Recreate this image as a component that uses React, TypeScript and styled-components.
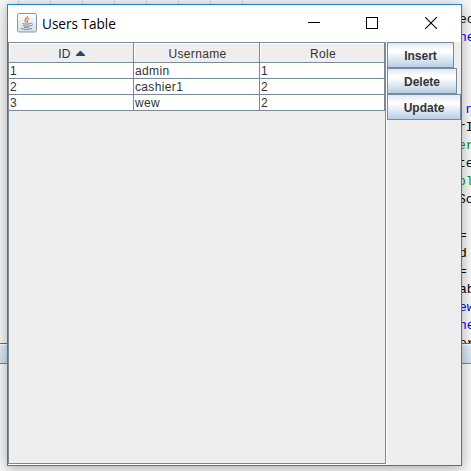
import React from "react";
import styled, { createGlobalStyle } from "styled-components";

const LINE = "#7a8a99";

const GlobalStyle = createGlobalStyle`
  * { box-sizing: border-box; }
  body { margin: 0; overflow: hidden; }
`;

const Desktop = styled.div`
  position: relative;
  width: 471px;
  height: 471px;
  overflow: hidden;
  background: #f7f7f7;
`;

const Editor = styled.div`
  display: flex;
  flex-direction: column;
  height: 471px;
`;

const Ruler = styled.div`
  flex: none;
  display: flex;
  gap: 31px;
  height: 11px;
  padding: 1px 0 0 18px;
`;

const Tick = styled.span`
  width: 1px;
  height: 3px;
  background: repeating-linear-gradient(#b5b5b5 0 1px, transparent 1px 2px);
`;

const CodeArea = styled.div`
  flex: none;
  height: 332px;
  padding-left: 456px;
  overflow: hidden;
`;

const CodeLine = styled.div<{ $color?: string; $shift?: number }>`
  height: 18px;
  padding-left: ${(p) => p.$shift ?? 0}px;
  font: 13px/18px "Liberation Mono", monospace;
  white-space: pre;
  color: ${(p) => p.$color ?? "#000"};
`;

const SplitBar = styled.div`
  flex: none;
  height: 21px;
  border-top: 1px solid #4c7396;
  border-bottom: 1px solid ${LINE};
  background: linear-gradient(#fbfdff 0 1px, #dfeaf5 2px, #cfdfee);
`;

const Window = styled.main`
  position: absolute;
  left: 7px;
  top: 4px;
  width: 455px;
  height: 462px;
  display: flex;
  flex-direction: column;
  border: 1px solid #1883d7;
  background: #eee;
  box-shadow: 0 2px 12px rgba(0, 0, 0, 0.32);
`;

const TitleBar = styled.header`
  flex: none;
  display: flex;
  align-items: center;
  height: 37px;
  padding: 0 24px 1px 9px;
  background: #fff;
`;

const Title = styled.h1`
  flex: 1;
  margin: 0 0 0 5px;
  font: 15px/20px "Open Sans", sans-serif;
  color: #000;
`;

const TitleText = styled.span`
  display: inline-block;
  transform: scaleX(0.905);
  transform-origin: left;
  white-space: nowrap;
`;

const Controls = styled.div`
  display: flex;
  align-items: center;
`;

const ControlIcon = styled.svg<{ $gap?: number }>`
  display: block;
  margin-right: ${(p) => p.$gap ?? 0}px;
`;

const Content = styled.div`
  flex: 1;
  display: flex;
  min-height: 0;
`;

const ScrollPane = styled.section`
  width: 378px;
  height: 422px;
  border: 1px solid ${LINE};
  box-shadow: 1px 1px #fff;
`;

const Table = styled.div`
  width: 376px;
  font: 12px/15px "Liberation Sans", Arial, sans-serif;
  letter-spacing: 0.35px;
  color: #333;
`;

const Row = styled.div`
  display: grid;
  grid-template-columns: 125px 126px 125px;
`;

const HeaderCell = styled.div`
  display: flex;
  align-items: center;
  justify-content: center;
  gap: 5px;
  height: 20px;
  padding: 3px 0 0 2px;
  border-right: 1px solid ${LINE};
  border-bottom: 1px solid ${LINE};
  background: #eee;
  box-shadow: inset 1px 1px #fff;
`;

const SortArrow = styled.svg`
  display: block;
  margin: -2px 1px 0 0;
`;

const Cell = styled.div`
  height: 16px;
  padding: 1px 0 0 1px;
  line-height: 14px;
  border-right: 1px solid ${LINE};
  border-bottom: 1px solid ${LINE};
  background: #fff;
`;

const Actions = styled.nav`
  display: flex;
  flex-direction: column;
  align-items: flex-start;
  padding-left: 1px;
`;

const Button = styled.button<{ $width: number }>`
  width: ${(p) => p.$width}px;
  height: 26px;
  padding: 2px 0 0;
  border: 1px solid ${LINE};
  border-radius: 0;
  background: linear-gradient(#dde8f3 0, #fff 30%, #fff 36%, #b8cfe5 100%);
  font: bold 12px/15px "Liberation Sans", Arial, sans-serif;
  color: #333;
`;

const JavaIcon = () => (
  <svg width="20" height="20" viewBox="0 0 20 20" fill="none">
    <defs>
      <linearGradient id="tile" x1="0" y1="0" x2="0" y2="1">
        <stop stopColor="#fff" />
        <stop offset="1" stopColor="#d5dbe1" />
      </linearGradient>
    </defs>
    <rect x="0.5" y="0.5" width="19" height="18.5" rx="1.5" fill="url(#tile)" stroke="#8998a9" />
    <path d="M10.5 3C11 5 7 5.9 8 8L9.4 9.6M12.3 5.3C9 6.5 10 7.3 10.8 8.3L10 9.6" stroke="#e5873c" strokeWidth="1.3" />
    <path d="M5.5 10.5c2 .8 6 .8 8 0M6 12.5c2 .8 5 .8 7 0M7 14.1c2 .5 3.5.5 5 0M4 15.3c3 1.4 8 1.4 11 0" stroke="#6c8ba8" strokeWidth="1" />
    <path d="M13.5 10.5c3-.5 2.5 2-.5 2.6" stroke="#6c8ba8" />
  </svg>
);

const code: { text: string; color?: string; shift?: number }[] = [
  { text: "ec", shift: 3 },
  { text: "ne", color: "#0000e6", shift: 3 },
  { text: "" },
  { text: "" },
  { text: "" },
  { text: " n", color: "#0000e6", shift: 2 },
  { text: "rI", shift: 2 },
  { text: "er", color: "#009900", shift: 2 },
  { text: "te", shift: 2 },
  { text: "ol", color: "#009900", shift: 2 },
  { text: "Sc", shift: 2 },
  { text: "" },
  { text: "=", shift: 3 },
  { text: "d", shift: 3 },
  { text: "=", shift: 3 },
  { text: "ab", shift: 3 },
  { text: "ew", color: "#0000e6", shift: 3 },
  { text: "ne", color: "#0000e6", shift: 3 },
  { text: "er", shift: 3 },
];

const users = [
  ["1", "admin", "1"],
  ["2", "cashier1", "2"],
  ["3", "wew", "2"],
];

export default function App() {
  return (
    <>
      <GlobalStyle />
      <Desktop>
        <Editor>
          <Ruler>
            {Array.from({ length: 8 }, (_, i) => <Tick key={i} />)}
          </Ruler>
          <CodeArea>
            {code.map((line, i) => (
              <CodeLine key={i} $color={line.color} $shift={line.shift}>{line.text}</CodeLine>
            ))}
          </CodeArea>
          <SplitBar />
        </Editor>
        <Window>
          <TitleBar>
            <JavaIcon />
            <Title><TitleText>Users Table</TitleText></Title>
            <Controls>
              <ControlIcon $gap={46} width="12" height="12"><path d="M0 5.5h12" stroke="#000" /></ControlIcon>
              <ControlIcon $gap={47} width="12" height="12"><rect x="0.5" y="0.5" width="11" height="11" fill="none" stroke="#000" /></ControlIcon>
              <ControlIcon width="12" height="12"><path d="M0 0l12 12M12 0L0 12" stroke="#000" strokeWidth="1.1" /></ControlIcon>
            </Controls>
          </TitleBar>
          <Content>
            <ScrollPane>
              <Table>
                <Row>
                  <HeaderCell>
                    ID
                    <SortArrow width="9" height="5"><path d="M0 5V4L4 0h1l4 4v1z" fill="#2c4864" /></SortArrow>
                  </HeaderCell>
                  <HeaderCell>Username</HeaderCell>
                  <HeaderCell>Role</HeaderCell>
                </Row>
                {users.map((user) => (
                  <Row key={user[0]}>
                    {user.map((value, i) => <Cell key={i}>{value}</Cell>)}
                  </Row>
                ))}
              </Table>
            </ScrollPane>
            <Actions>
              <Button $width={67}>Insert</Button>
              <Button $width={70}>Delete</Button>
              <Button $width={74}>Update</Button>
            </Actions>
          </Content>
        </Window>
      </Desktop>
    </>
  );
}
